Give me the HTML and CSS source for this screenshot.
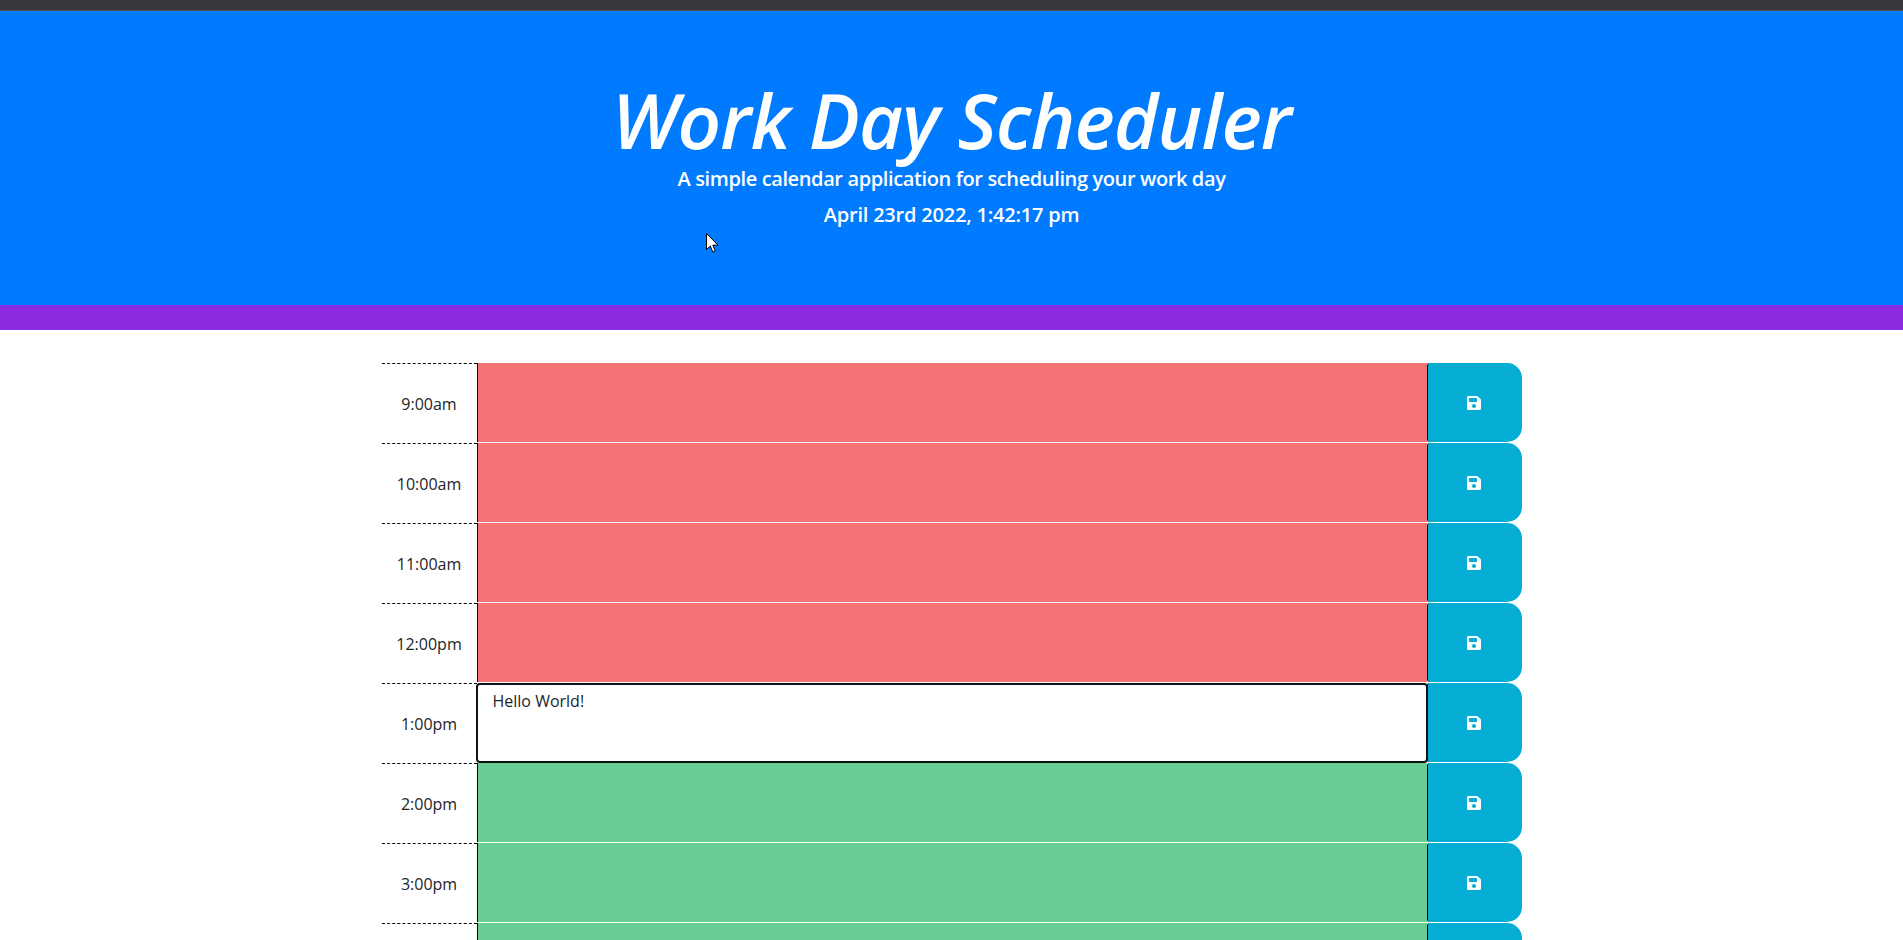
FILE: index.html
```html
<!DOCTYPE html>
<html lang="en">
<head>
  <meta charset="UTF-8">
  <title>Work Day Scheduler</title>
  <link rel="stylesheet" href="styles.css">
</head>
<body>
  <div class="topbar"></div>

  <header class="jumbotron">
    <h1 class="title">Work Day Scheduler</h1>
    <p class="lead">A simple calendar application for scheduling your work day</p>
    <p class="current-day">April 23rd 2022, 1:42:17 pm</p>
  </header>

  <svg class="cursor" width="13" height="20" viewBox="0 0 13 20">
    <path d="M0.5 0.5V16.5L4.3 13L6.8 19L9.3 18L6.8 12.2H12Z" fill="#fff" stroke="#000" stroke-width="1"/>
  </svg>

  <main class="container">
    <div class="row">
      <div class="hour">9:00am</div>
      <textarea class="description past"></textarea>
      <button class="saveBtn"><svg class="icon" viewBox="0 0 448 512"><use href="#save"/></svg></button>
    </div>
    <div class="row">
      <div class="hour">10:00am</div>
      <textarea class="description past"></textarea>
      <button class="saveBtn"><svg class="icon" viewBox="0 0 448 512"><use href="#save"/></svg></button>
    </div>
    <div class="row">
      <div class="hour">11:00am</div>
      <textarea class="description past"></textarea>
      <button class="saveBtn"><svg class="icon" viewBox="0 0 448 512"><use href="#save"/></svg></button>
    </div>
    <div class="row">
      <div class="hour">12:00pm</div>
      <textarea class="description past"></textarea>
      <button class="saveBtn"><svg class="icon" viewBox="0 0 448 512"><use href="#save"/></svg></button>
    </div>
    <div class="row">
      <div class="hour">1:00pm</div>
      <textarea class="description present">Hello World!</textarea>
      <button class="saveBtn"><svg class="icon" viewBox="0 0 448 512"><use href="#save"/></svg></button>
    </div>
    <div class="row">
      <div class="hour">2:00pm</div>
      <textarea class="description future"></textarea>
      <button class="saveBtn"><svg class="icon" viewBox="0 0 448 512"><use href="#save"/></svg></button>
    </div>
    <div class="row">
      <div class="hour">3:00pm</div>
      <textarea class="description future"></textarea>
      <button class="saveBtn"><svg class="icon" viewBox="0 0 448 512"><use href="#save"/></svg></button>
    </div>
    <div class="row">
      <div class="hour"></div>
      <textarea class="description future"></textarea>
      <button class="saveBtn"><svg class="icon" viewBox="0 0 448 512"><use href="#save"/></svg></button>
    </div>
  </main>

  <svg width="0" height="0" class="defs">
    <symbol id="save" viewBox="0 0 448 512">
      <path fill="currentColor" d="M433.941 129.941l-83.882-83.882A48 48 0 0 0 316.118 32H48C21.49 32 0 53.49 0 80v352c0 26.51 21.49 48 48 48h352c26.51 0 48-21.49 48-48V163.882a48 48 0 0 0-14.059-33.941zM224 416c-35.346 0-64-28.654-64-64 0-35.346 28.654-64 64-64s64 28.654 64 64c0 35.346-28.654 64-64 64zm96-304.52V212c0 6.627-5.373 12-12 12H76c-6.627 0-12-5.373-12-12V108c0-6.627 5.373-12 12-12h228.52c3.183 0 6.235 1.264 8.485 3.515l3.48 3.48A11.996 11.996 0 0 1 320 111.48z"/>
    </symbol>
  </svg>
</body>
</html>
```

FILE: styles.css
```css
* {
  box-sizing: border-box;
}

html, body {
  height: 100%;
  overflow: hidden;
}

body {
  margin: 0;
  background: #fff;
  color: #212529;
  font-family: "Open Sans", sans-serif;
  font-size: 16px;
  line-height: 1.5;
}

.topbar {
  height: 11px;
  background: #36373b;
  border-bottom: 1px solid #555;
}

.jumbotron {
  height: 319px;
  padding-top: 66px;
  background: #007bff;
  border-bottom: 25px solid #8a2be2;
  color: #fff;
  text-align: center;
}

.title {
  margin: 0;
  font-size: 76px;
  font-style: italic;
  font-weight: 600;
  line-height: 85px;
  letter-spacing: -0.85px;
}

.lead {
  margin: 2px 0 6px;
  font-size: 20px;
  font-weight: 600;
  letter-spacing: -0.38px;
}

.current-day {
  margin: 0;
  font-size: 20px;
  font-weight: 600;
  letter-spacing: -0.2px;
}

.cursor {
  position: absolute;
  left: 706px;
  top: 233px;
}

.container {
  width: 1140px;
  margin: 32px auto 0;
}

.row {
  display: grid;
  grid-template-columns: 95px 950px 95px;
  height: 80px;
  border-top: 1px solid #fff;
}

.hour {
  display: flex;
  align-items: center;
  justify-content: center;
  padding-top: 1px;
  border-top: 1px dashed #000;
  font-size: 16px;
}

.description {
  display: block;
  width: 100%;
  height: 79px;
  padding: 4px 16px;
  border: 0;
  border-left: 1px solid #000;
  border-radius: 0;
  outline: 0;
  color: #212529;
  font-family: inherit;
  font-size: 16px;
  line-height: 1.5;
  resize: none;
}

.past {
  background: #f57274;
}

.future {
  background: #68cc93;
}

.present {
  position: relative;
  z-index: 1;
  width: 952px;
  height: 80px;
  margin-left: -1px;
  padding: 4px 15px;
  background: #fff;
  border: 2px solid #111;
  border-radius: 4px;
}

.saveBtn {
  display: flex;
  align-items: center;
  justify-content: center;
  height: 79px;
  padding: 0 2px 0 0;
  border: 0;
  border-left: 1px solid #000;
  border-radius: 3px 15px 15px 3px;
  background: #06aed5;
  color: #fff;
}

.icon {
  width: 14px;
  height: 16px;
}

.defs {
  position: absolute;
}
```
